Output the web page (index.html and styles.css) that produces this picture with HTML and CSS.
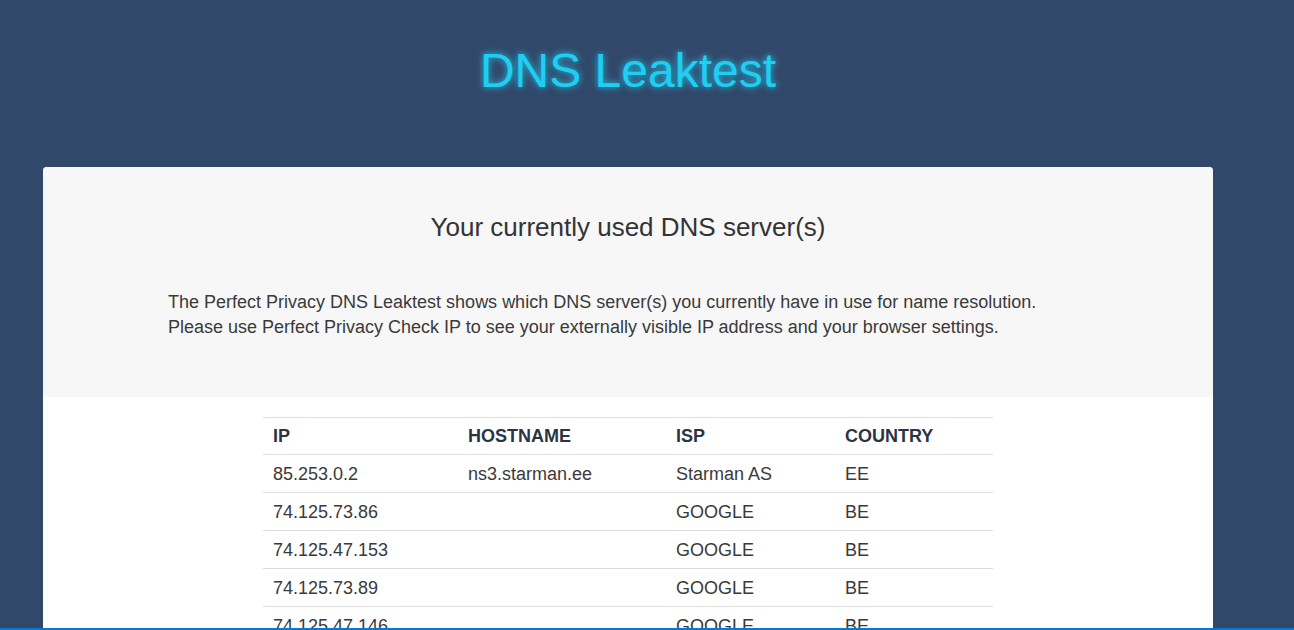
FILE: index.html
```html
<!DOCTYPE html>
<html>
<head>
<meta charset="utf-8">
<title>DNS Leaktest</title>
<link rel="stylesheet" href="styles.css">
</head>
<body>
<header class="hero">
  <h1 class="hero-title">DNS Leaktest</h1>
</header>
<main class="card">
  <section class="intro">
    <h2 class="intro-title">Your currently used DNS server(s)</h2>
    <p class="intro-text">The Perfect Privacy DNS Leaktest shows which DNS server(s) you currently have in use for name resolution.<br>Please use Perfect Privacy Check IP to see your externally visible IP address and your browser settings.</p>
  </section>
  <section class="results">
    <table class="dns-table">
      <thead>
        <tr><th class="c-ip">IP</th><th class="c-host">HOSTNAME</th><th class="c-isp">ISP</th><th class="c-country">COUNTRY</th></tr>
      </thead>
      <tbody>
        <tr><td>85.253.0.2</td><td>ns3.starman.ee</td><td>Starman AS</td><td>EE</td></tr>
        <tr><td>74.125.73.86</td><td></td><td>GOOGLE</td><td>BE</td></tr>
        <tr><td>74.125.47.153</td><td></td><td>GOOGLE</td><td>BE</td></tr>
        <tr><td>74.125.73.89</td><td></td><td>GOOGLE</td><td>BE</td></tr>
        <tr><td>74.125.47.146</td><td></td><td>GOOGLE</td><td>BE</td></tr>
      </tbody>
    </table>
  </section>
</main>
<div class="taskbar-edge"></div>
</body>
</html>
```

FILE: styles.css
```css
html, body {
  margin: 0;
  padding: 0;
}
body {
  background: #32486a;
  font-family: "Liberation Sans", Arial, sans-serif;
  color: #333;
  overflow: hidden;
  height: 630px;
}
.hero {
  width: 1170px;
  margin-left: 43px;
  padding-top: 43px;
  height: 167px;
  box-sizing: border-box;
}
.hero-title {
  margin: 0;
  text-align: center;
  font-size: 48px;
  font-weight: normal;
  line-height: 56px;
  color: #1fcff3;
  text-shadow: 0 0 6px rgba(31, 207, 243, 0.75), 0 0 10px rgba(31, 207, 243, 0.35);
}
.card {
  width: 1170px;
  margin-left: 43px;
  background: #fff;
  border-radius: 4px 4px 0 0;
  overflow: hidden;
}
.intro {
  background: #f7f7f7;
  padding: 45px 125px 57px;
}
.intro-title {
  margin: 0 0 48px;
  text-align: center;
  font-size: 26px;
  font-weight: normal;
  line-height: 30px;
  color: #333;
}
.intro-text {
  margin: 0;
  font-size: 18px;
  line-height: 25px;
  color: #3a3a3a;
}
.results {
  padding-top: 20px;
}
.dns-table {
  width: 730px;
  margin-left: 220px;
  border-collapse: collapse;
  font-size: 18px;
  color: #3a3a3a;
}
.dns-table th, .dns-table td {
  border-top: 1px solid #dddddd;
  padding: 0 10px;
  height: 37px;
  text-align: left;
  line-height: 20px;
}
.dns-table th {
  height: 36px;
  font-weight: bold;
  color: #2b3444;
}
.c-ip { width: 175px; }
.c-host { width: 188px; }
.c-isp { width: 149px; }
.c-country { width: 138px; }
.taskbar-edge {
  position: fixed;
  left: 0;
  right: 0;
  bottom: 0;
  height: 2px;
  background: #0a78d2;
}
```
